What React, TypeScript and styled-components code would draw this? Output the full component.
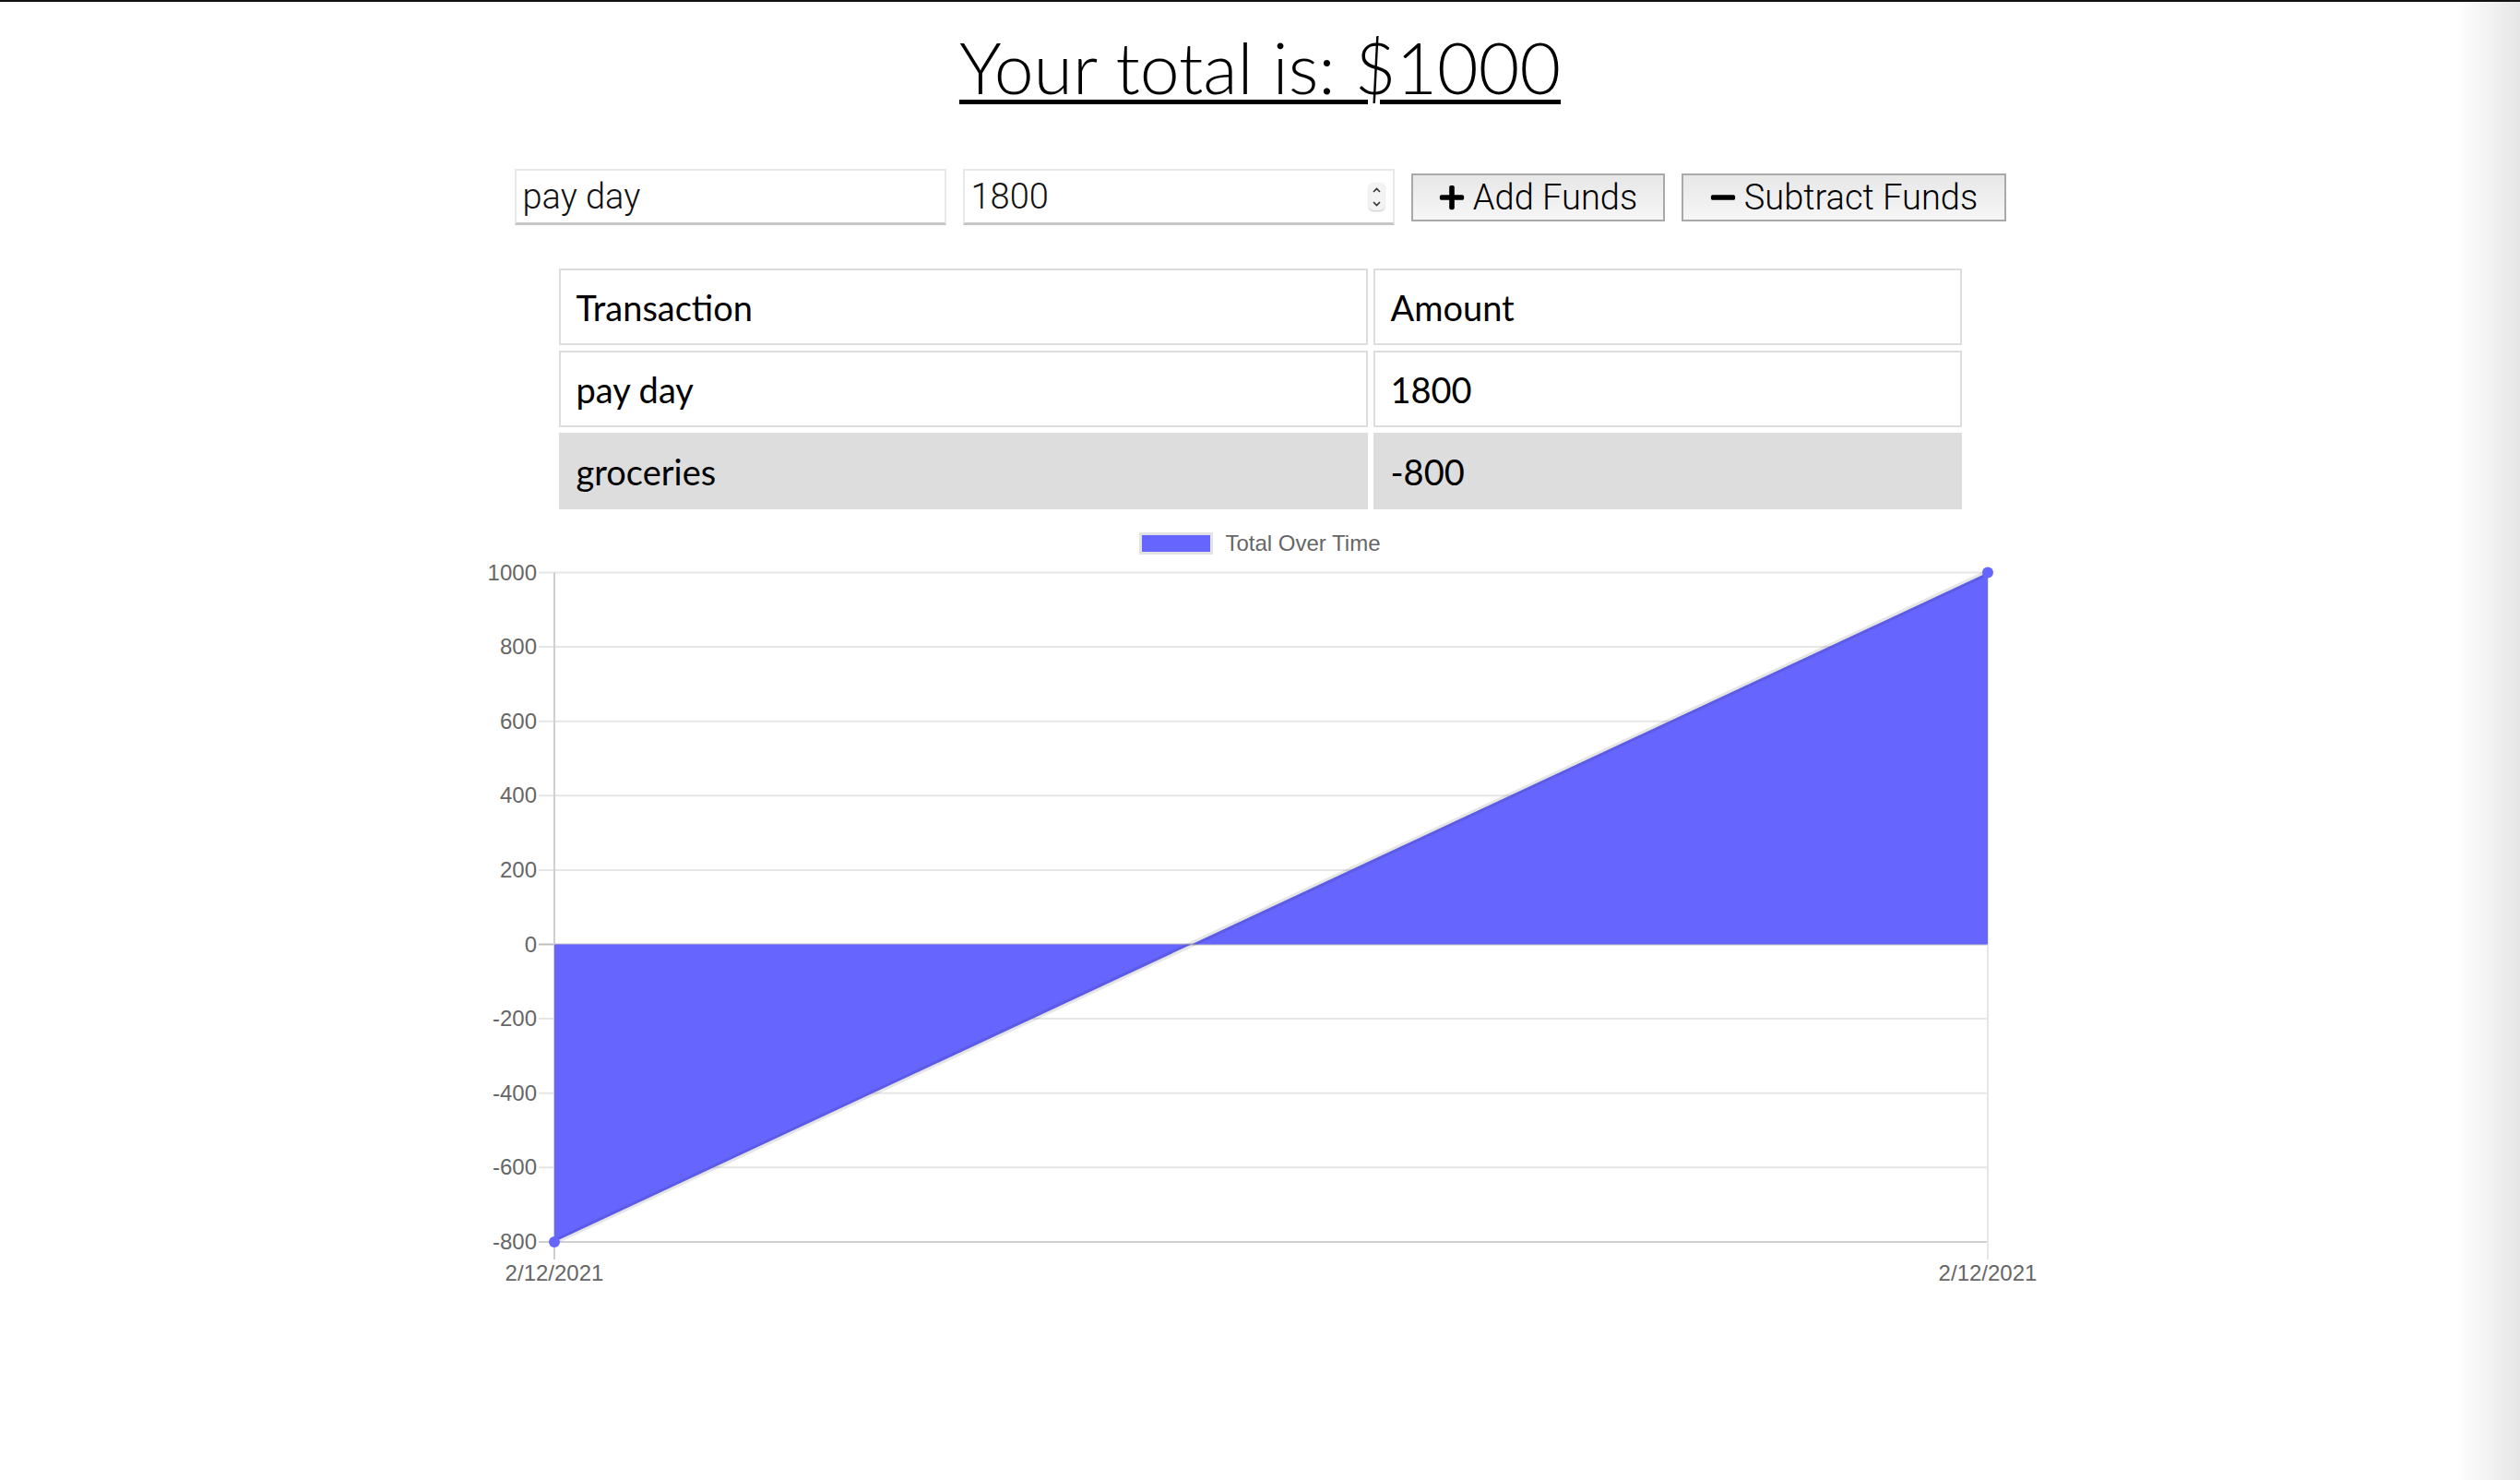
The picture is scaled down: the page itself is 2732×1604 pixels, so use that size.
import React from "react"
import styled, { createGlobalStyle } from "styled-components"
import { FaPlus, FaMinus } from "react-icons/fa"

const GlobalStyle = createGlobalStyle`
  html {
    background: linear-gradient(to right, #fff 0, #fff calc(100% - 70px), #e6e6e6 100%);
  }
  body {
    margin: 0;
    font-family: Lato, "Open Sans", sans-serif;
    color: #000;
  }
`

const TopBar = styled.div`
  height: 2px;
  background-color: #111;
`

const Wrapper = styled.div`
  display: flex;
  flex-direction: column;
  align-items: center;
`

const Total = styled.h1`
  margin: 23px 0 0;
  font-family: Lato, sans-serif;
  font-weight: 300;
  font-size: 77px;
  line-height: 94px;
  text-decoration: underline;
  text-decoration-thickness: 5px;
  text-underline-offset: 6px;
`

const Form = styled.div`
  display: flex;
  align-items: center;
  gap: 18px;
  margin-top: 64px;
`

const fieldLook = `
  box-sizing: border-box;
  width: 468px;
  height: 61px;
  border: 2px solid #e8e8e8;
  border-bottom: 3px solid #c6c6c6;
  background: #fff;
`

const TextInput = styled.input`
  ${fieldLook}
  padding: 0 7px;
  font-family: Roboto, sans-serif;
  font-weight: 300;
  font-size: 38px;
  color: #111;
  outline: none;
`

const NumberBox = styled.div`
  ${fieldLook}
  display: flex;
  align-items: center;
  padding: 0 9px 0 7px;
`

const NumberInput = styled.input`
  flex: 1;
  min-width: 0;
  border: none;
  padding: 0;
  font-family: Roboto, sans-serif;
  font-weight: 300;
  font-size: 38px;
  color: #111;
  outline: none;
  background: transparent;
`

const Spinner = styled.span`
  display: flex;
  flex-direction: column;
  justify-content: space-around;
  align-items: center;
  width: 17px;
  height: 30px;
  border-radius: 5px;
  background: #f3f3f3;
  box-shadow: 0 1px 2px rgba(0, 0, 0, 0.25);
`

const Button = styled.button<{ $w: number }>`
  box-sizing: border-box;
  width: ${(p) => p.$w}px;
  height: 52px;
  display: inline-flex;
  align-items: center;
  justify-content: center;
  gap: 8px;
  padding: 0;
  border: 2px solid #a9a9a9;
  background: linear-gradient(#e7e7e7, #f6f6f6);
  font-family: Roboto, sans-serif;
  font-weight: 300;
  font-size: 38px;
  color: #000;
`

const Table = styled.table`
  margin-top: 41px;
  width: 1533px;
  table-layout: fixed;
  border-collapse: separate;
  border-spacing: 6px;
  text-align: left;
`

const Cell = styled.td<{ $shade?: boolean; $w?: number }>`
  box-sizing: border-box;
  height: 83px;
  ${(p) => (p.$w ? `width: ${p.$w}px;` : "")}
  padding: 0 17px;
  border: 2px solid #ddd;
  background: ${(p) => (p.$shade ? "#ddd" : "#fff")};
  font-family: Lato, sans-serif;
  font-weight: 400;
  font-size: 38px;
  color: #000;
`

const Legend = styled.div`
  display: flex;
  align-items: center;
  gap: 13px;
  margin-top: 19px;
  height: 24px;
`

const Swatch = styled.span`
  box-sizing: border-box;
  width: 80px;
  height: 24px;
  background: #6666ff;
  border: 3px solid #e3e3e3;
`

const LegendLabel = styled.span`
  font-family: "Liberation Sans", Arial, sans-serif;
  font-size: 24px;
  color: #666;
`

const ChartSvg = styled.svg`
  display: block;
`

const rows = [
  { name: "pay day", value: 1800 },
  { name: "groceries", value: -800 },
]

const ticks = [1000, 800, 600, 400, 200, 0, -200, -400, -600, -800]
const top = 620.5
const bottom = 1345.9
const x0 = 601
const x1 = 2155
const yOf = (v: number) => top + ((1000 - v) * (bottom - top)) / 1800

function Chart() {
  const pts = [
    { x: x0, y: yOf(-800) },
    { x: x1, y: yOf(1000) },
  ]
  const zy = yOf(0)
  const cross = x0 + ((pts[0].y - zy) / (pts[0].y - pts[1].y)) * (x1 - x0)
  const lineColor = (v: number) => (v === 0 ? "#bfbfbf" : v === -800 ? "#cfcfcf" : "#e6e6e6")

  return (
    <ChartSvg width={1700} height={800} viewBox="516 601 1700 800">
      {ticks.map((v) => (
        <g key={v}>
          <line x1={584} x2={x1} y1={yOf(v)} y2={yOf(v)} stroke={lineColor(v)} strokeWidth={2} />
          <text
            x={582}
            y={yOf(v) + 8}
            textAnchor="end"
            fontFamily="Liberation Sans, Arial, sans-serif"
            fontSize={24}
            fill="#666"
          >
            {v}
          </text>
        </g>
      ))}
      <line x1={x0} x2={x0} y1={top} y2={1365} stroke="#cfcfcf" strokeWidth={2} />
      <line x1={x1} x2={x1} y1={top} y2={1365} stroke="#e6e6e6" strokeWidth={2} />
      {[x0, x1].map((x) => (
        <text
          key={x}
          x={x}
          y={1388}
          textAnchor="middle"
          fontFamily="Liberation Sans, Arial, sans-serif"
          fontSize={24}
          fill="#666"
        >
          2/12/2021
        </text>
      ))}
      <polygon points={`${x0},${zy} ${pts[0].x},${pts[0].y} ${cross},${zy}`} fill="#6666ff" />
      <polygon points={`${cross},${zy} ${pts[1].x},${pts[1].y} ${x1},${zy}`} fill="#6666ff" />
      <line
        x1={pts[0].x}
        y1={pts[0].y}
        x2={pts[1].x}
        y2={pts[1].y}
        stroke="rgba(0,0,0,0.1)"
        strokeWidth={6}
      />
      {pts.map((p) => (
        <circle key={p.x} cx={p.x} cy={p.y} r={6} fill="#6666ff" />
      ))}
    </ChartSvg>
  )
}

function App() {
  return (
    <>
      <GlobalStyle />
      <TopBar />
      <Wrapper>
        <Total>Your total is: $1000</Total>
        <Form>
          <TextInput defaultValue="pay day" />
          <NumberBox>
            <NumberInput defaultValue="1800" />
            <Spinner>
              <svg width="9" height="6" viewBox="0 0 9 6">
                <path d="M1 5 L4.5 1.5 L8 5" fill="none" stroke="#333" strokeWidth="1.6" />
              </svg>
              <svg width="9" height="6" viewBox="0 0 9 6">
                <path d="M1 1 L4.5 4.5 L8 1" fill="none" stroke="#333" strokeWidth="1.6" />
              </svg>
            </Spinner>
          </NumberBox>
          <Button $w={275}>
            <FaPlus size={30} />
            Add Funds
          </Button>
          <Button $w={352}>
            <FaMinus size={30} />
            Subtract Funds
          </Button>
        </Form>
        <Table>
          <tbody>
            <tr>
              <Cell as="th" $w={877}>
                Transaction
              </Cell>
              <Cell as="th">Amount</Cell>
            </tr>
            {rows.map((r, i) => (
              <tr key={r.name}>
                <Cell $shade={i % 2 === 1}>{r.name}</Cell>
                <Cell $shade={i % 2 === 1}>{r.value}</Cell>
              </tr>
            ))}
          </tbody>
        </Table>
        <Legend>
          <Swatch />
          <LegendLabel>Total Over Time</LegendLabel>
        </Legend>
        <Chart />
      </Wrapper>
    </>
  )
}

export default App
